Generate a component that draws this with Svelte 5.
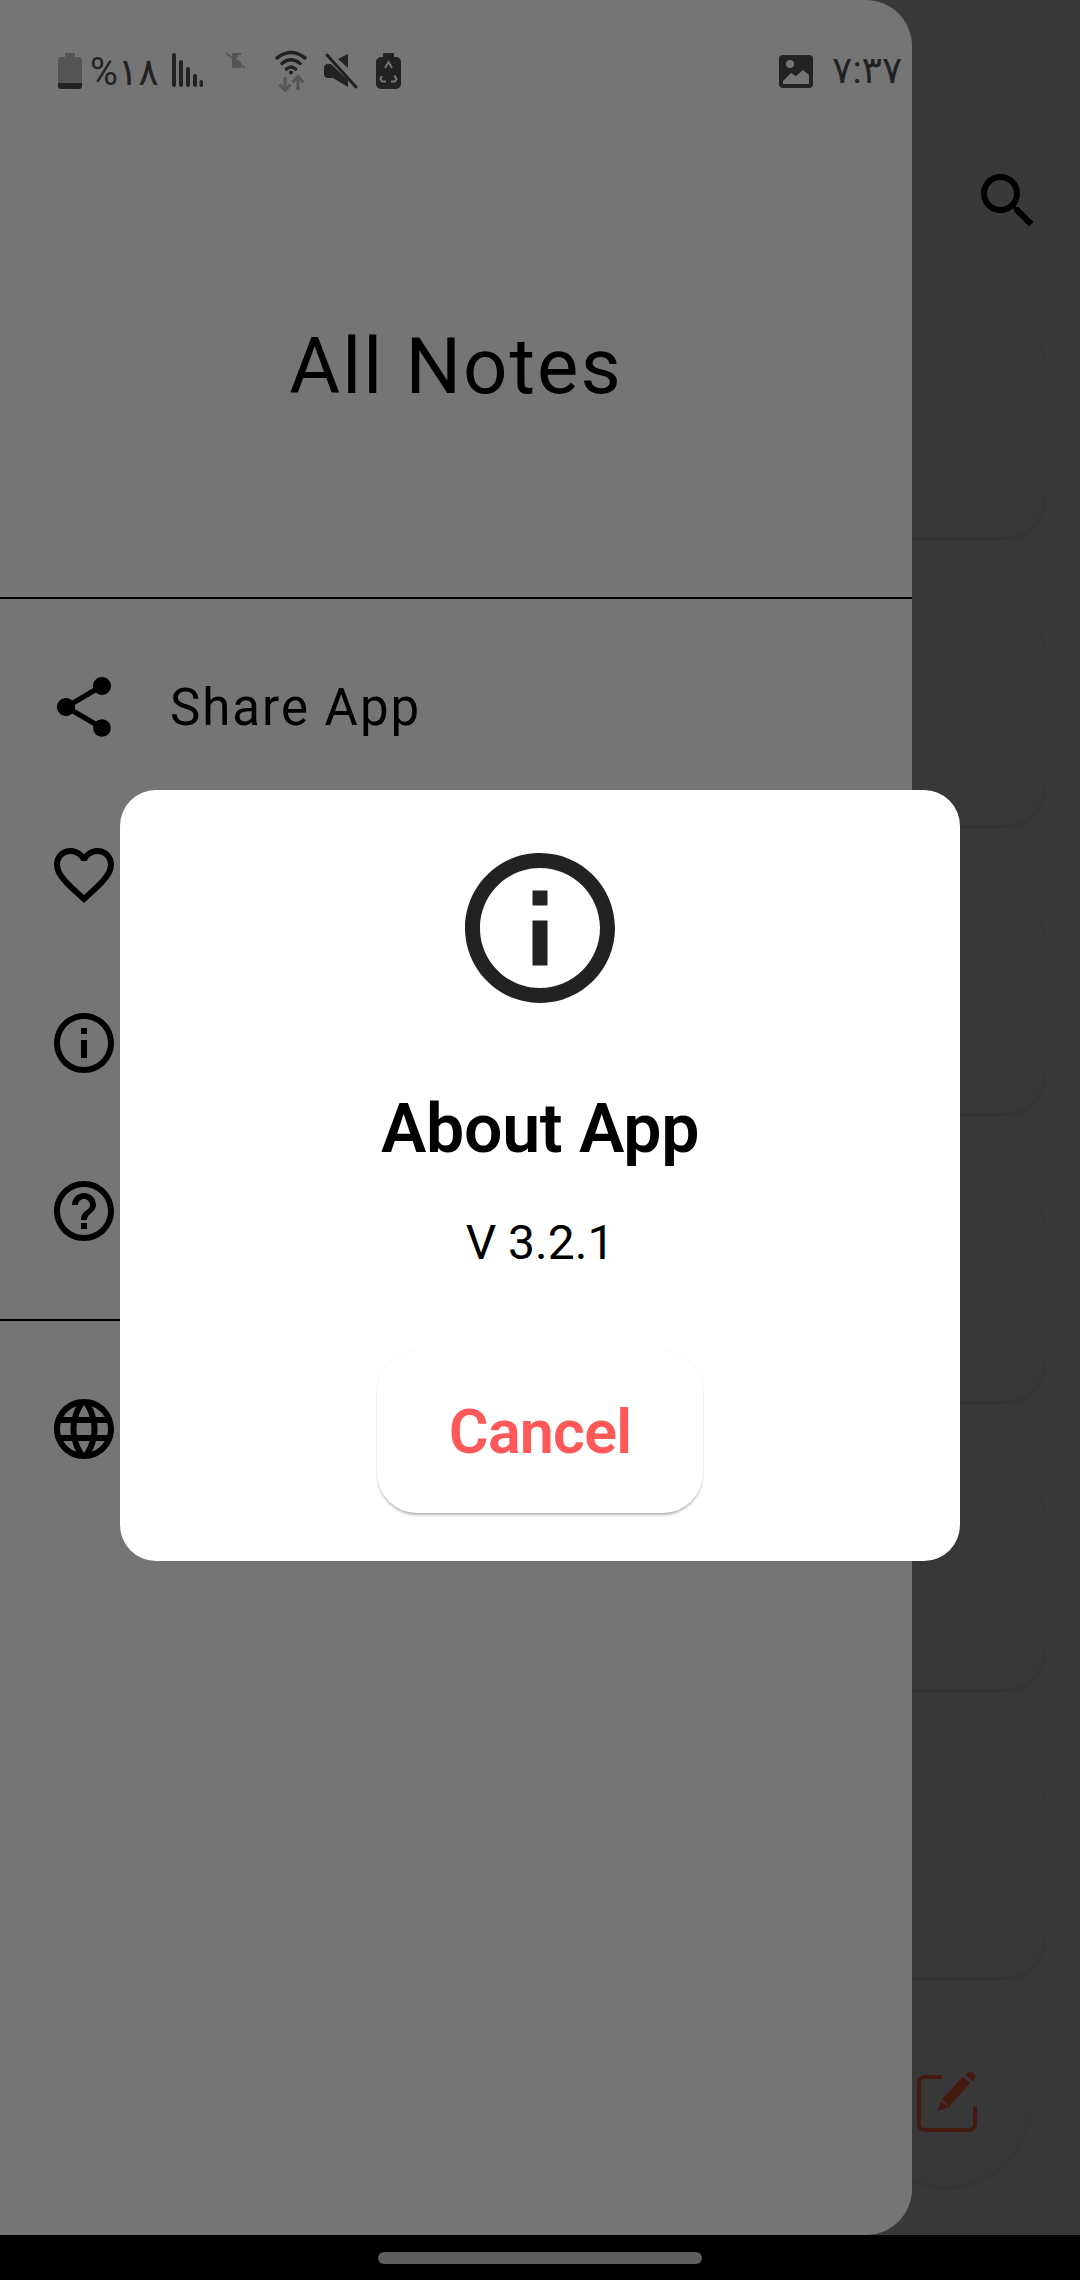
<script lang="ts">
  const cards = [1, 2, 3, 4, 5, 6]
  const info = 'M11 7h2v2h-2zm0 4h2v6h-2zm1-9C6.48 2 2 6.48 2 12s4.48 10 10 10 10-4.48 10-10S17.52 2 12 2zm0 18c-4.41 0-8-3.59-8-8s3.59-8 8-8 8 3.59 8 8-3.59 8-8 8z'
  const menu = [
    { label: 'Share App', icon: 'M18 16.08c-.76 0-1.44.3-1.96.77L8.91 12.7c.05-.23.09-.46.09-.7s-.04-.47-.09-.7l7.05-4.11c.54.5 1.25.81 2.04.81 1.66 0 3-1.34 3-3s-1.34-3-3-3-3 1.34-3 3c0 .24.04.47.09.7L8.04 9.81C7.5 9.31 6.79 9 6 9c-1.66 0-3 1.34-3 3s1.34 3 3 3c.79 0 1.5-.31 2.04-.81l7.12 4.16c-.05.21-.08.43-.08.65 0 1.61 1.31 2.92 2.92 2.92 1.61 0 2.92-1.31 2.92-2.92s-1.31-2.92-2.92-2.92z' },
    { label: '', icon: 'M16.5 3c-1.74 0-3.41.81-4.5 2.09C10.91 3.81 9.24 3 7.5 3 4.42 3 2 5.42 2 8.5c0 3.78 3.4 6.86 8.55 11.54L12 21.35l1.45-1.32C18.6 15.36 22 12.28 22 8.5 22 5.42 19.58 3 16.5 3zm-4.4 15.55l-.1.1-.1-.1C7.14 14.24 4 11.39 4 8.5 4 6.5 5.5 5 7.5 5c1.54 0 3.04.99 3.57 2.36h1.87C13.46 5.99 14.96 5 16.5 5c2 0 3.5 1.5 3.5 3.5 0 2.89-3.14 5.74-7.9 10.05z' },
    { label: '', icon: info },
    { label: '', icon: 'M11 18h2v-2h-2v2zm1-16C6.48 2 2 6.48 2 12s4.48 10 10 10 10-4.48 10-10S17.52 2 12 2zm0 18c-4.41 0-8-3.59-8-8s3.59-8 8-8 8 3.59 8 8-3.59 8-8 8zm0-14c-2.21 0-4 1.79-4 4h2c0-1.1.9-2 2-2s2 .9 2 2c0 2-3 1.75-3 5h2c0-2.25 3-2.5 3-5 0-2.21-1.79-4-4-4z' }
  ]
  const globe = 'M11.99 2C6.47 2 2 6.48 2 12s4.47 10 9.99 10C17.52 22 22 17.52 22 12S17.52 2 11.99 2zm6.93 6h-2.95c-.32-1.25-.78-2.45-1.38-3.56 1.84.63 3.37 1.91 4.33 3.56zM12 4.04c.83 1.2 1.48 2.53 1.91 3.96h-3.82c.43-1.43 1.08-2.76 1.91-3.96zM4.26 14C4.1 13.36 4 12.69 4 12s.1-1.36.26-2h3.38c-.08.66-.14 1.32-.14 2 0 .68.06 1.34.14 2H4.26zm.82 2h2.95c.32 1.25.78 2.45 1.38 3.56-1.84-.63-3.37-1.9-4.33-3.56zm2.95-8H5.08c.96-1.66 2.49-2.93 4.33-3.56C8.81 5.55 8.35 6.75 8.03 8zM12 19.96c-.83-1.2-1.48-2.53-1.91-3.96h3.82c-.43 1.43-1.08 2.76-1.91 3.96zM14.34 14H9.66c-.09-.66-.16-1.32-.16-2 0-.68.07-1.35.16-2h4.68c.09.65.16 1.32.16 2 0 .68-.07 1.34-.16 2zm.25 5.56c.6-1.11 1.06-2.31 1.38-3.56h2.95c-.96 1.65-2.49 2.93-4.33 3.56zM16.36 14c.08-.66.14-1.32.14-2 0-.68-.06-1.34-.14-2h3.38c.16.64.26 1.31.26 2s-.1 1.36-.26 2h-3.38z'
</script>

<div class="screen">
  <main class="notes">
    <header class="appbar">
      <svg class="icon" viewBox="0 0 24 24"><path d="M15.5 14h-.79l-.28-.27C15.41 12.59 16 11.11 16 9.5 16 5.91 13.09 3 9.5 3S3 5.91 3 9.5 5.91 16 9.5 16c1.61 0 3.09-.59 4.23-1.57l.27.28v.79l5 4.99L20.49 19l-4.99-5zm-6 0C7.01 14 5 11.99 5 9.5S7.01 5 9.5 5 14 7.01 14 9.5 11.99 14 9.5 14z" /></svg>
    </header>
    <div class="card-list">
      {#each cards as card (card)}
        <div class="card"></div>
      {/each}
    </div>
    <div class="fab">
      <svg width="60" height="60" viewBox="0 0 60 60">
        <path d="M23 5H8a6 6 0 0 0-6 6v41a6 6 0 0 0 6 6h44a6 6 0 0 0 6-6V36" fill="none" stroke="#441a10" stroke-width="4" stroke-linecap="round" />
        <path d="M21 39l3-10 8 6zM25 27L46 5l7 6-21 24zM48 3l3-2.500c2-1 4-1 5.500.5s2.500 3.500 1.500 5.500L55.500 9z" fill="#441a10" />
      </svg>
    </div>
  </main>

  <nav class="navbar"><span class="pill"></span></nav>

  <aside class="drawer">
    <div class="drawer-head"><h1>All Notes</h1></div>
    <div class="menu">
      {#each menu as item}
        <div class="row">
          <svg class="icon" viewBox="0 0 24 24"><path d={item.icon} /></svg>
          {#if item.label}<span>{item.label}</span>{/if}
        </div>
      {/each}
    </div>
    <div class="menu">
      <div class="row">
        <svg class="icon" viewBox="0 0 24 24"><path d={globe} /></svg>
      </div>
    </div>
  </aside>

  <div class="statusbar">
    <div class="status-left">
      <svg width="24" height="42" viewBox="0 0 24 42">
        <path d="M7 3h10v4h4a3 3 0 0 1 3 3v23H0V10a3 3 0 0 1 3-3h4z" fill="#555" />
        <path d="M0 33h24v3a3 3 0 0 1-3 3H3a3 3 0 0 1-3-3z" fill="#222" />
      </svg>
      <span class="level">%۱۸</span>
      <svg class="gap-signal" width="31" height="42" viewBox="0 0 31 42" fill="#222">
        <rect x="0" y="3" width="4" height="34" rx="2" />
        <rect x="7" y="10" width="4" height="27" rx="2" />
        <rect x="14" y="17" width="4" height="20" rx="2" />
        <rect x="21" y="24" width="4" height="13" rx="2" />
        <rect x="27.500" y="30" width="3.500" height="7" rx="1.700" />
      </svg>
      <svg class="gap-dim" width="19" height="42" viewBox="0 0 19 42">
        <path d="M6 3h9v2h-2l-3 4 5 3v6H6z" fill="#555" />
        <path d="M0 3l19 15" stroke="#555" stroke-width="1.500" />
      </svg>
      <svg class="gap-wifi" width="32" height="42" viewBox="0 0 32 42">
        <path d="M2 8Q16-3 30 8M7 13.500Q16 6 25 13.500M11.500 19Q16 15 20.500 19" fill="none" stroke="#222" stroke-width="3.500" stroke-linecap="round" />
        <circle cx="16" cy="22.500" r="2" fill="#222" />
        <path d="M10 27v13M4.500 34.500l5.500 6 5.500-6M23 40V27M17.500 32.500l5.500-6 5.500 6" fill="none" stroke="#555" stroke-width="3" />
      </svg>
      <svg class="gap-mute" width="34" height="42" viewBox="0 0 34 42">
        <path d="M24 4v14L14 9zM0 18a4 4 0 0 1 4-4h3l17 16v7L9 28H4a4 4 0 0 1-4-4z" fill="#222" />
        <path d="M3 5l29 32" stroke="#222" stroke-width="3" stroke-linecap="round" />
      </svg>
      <svg class="gap-recycle" width="25" height="42" viewBox="0 0 25 42">
        <path d="M7 3h11v4h2a5 5 0 0 1 5 5v22a5 5 0 0 1-5 5H5a5 5 0 0 1-5-5V12a5 5 0 0 1 5-5h2z" fill="#222" />
        <path d="M9 18l3.500-6 3.500 6M6 26l-1.500 3 1.500 2.500h4M15 31.500h4l1.500-2.500-2-3.500" fill="none" stroke="#757575" stroke-width="2" />
      </svg>
    </div>
    <div class="status-right">
      <svg width="34" height="42" viewBox="0 0 34 42">
        <rect y="5" width="34" height="33" rx="4" fill="#222" />
        <circle cx="11" cy="14" r="4" fill="#757575" />
        <path d="M4 31v3h26v-9l-6-5-7 6-5-3z" fill="#757575" />
      </svg>
      <span class="time">۷:۳۷</span>
    </div>
  </div>

  <div class="scrim">
    <section class="dialog">
      <svg class="dialog-icon" viewBox="0 0 24 24"><path d={info} /></svg>
      <h2>About App</h2>
      <p>V 3.2.1</p>
      <button type="button">Cancel</button>
    </section>
  </div>
</div>

<style>
  :global(body) {
    margin: 0;
    background: #000;
  }

  .screen {
    position: relative;
    width: 1080px;
    height: 2280px;
    display: flex;
    flex-direction: column;
    overflow: hidden;
    background: #393939;
    font-family: Roboto, "DejaVu Sans", sans-serif;
    color: #000;
  }

  .notes {
    position: relative;
    flex: 1;
    padding: 165px 36px 0;
  }

  .appbar {
    display: flex;
    justify-content: flex-end;
    height: 156px;
  }

  .icon {
    width: 72px;
    height: 72px;
    flex: none;
  }

  .card-list {
    display: flex;
    flex-direction: column;
    gap: 72px;
  }

  .card {
    height: 216px;
    border-radius: 38px;
    background: #383838;
    box-shadow: 0 3px 4px -1px rgba(0, 0, 0, 0.14);
  }

  .fab {
    position: absolute;
    left: 862px;
    top: 2017px;
    width: 170px;
    height: 170px;
    border-radius: 50%;
    display: flex;
    align-items: center;
    justify-content: center;
    background: #383838;
    box-shadow: 0 2px 3px -1px rgba(0, 0, 0, 0.14);
  }

  .navbar {
    height: 45px;
    display: flex;
    justify-content: center;
    align-items: flex-start;
    background: #000;
  }

  .pill {
    width: 324px;
    height: 12px;
    margin-top: 17px;
    border-radius: 6px;
    background: #5f5f5f;
  }

  .drawer {
    position: absolute;
    left: 0;
    top: 0;
    width: 912px;
    height: 2235px;
    border-radius: 0 46px 46px 0;
    background: #757575;
  }

  .drawer-head {
    height: 599px;
    box-sizing: border-box;
    padding-top: 322px;
    text-align: center;
    border-bottom: 2px solid #000;
  }

  h1 {
    margin: 0;
    font-size: 78px;
    line-height: 90px;
    font-weight: 400;
    letter-spacing: 2px;
  }

  .menu {
    padding: 24px 0;
    border-bottom: 2px solid #000;
  }

  .menu:last-child {
    border-bottom: 0;
  }

  .row {
    height: 168px;
    display: flex;
    align-items: center;
    gap: 50px;
    padding-left: 48px;
    font-size: 51px;
    letter-spacing: 2px;
  }

  .statusbar {
    position: absolute;
    left: 58px;
    top: 50px;
    width: 842px;
    height: 42px;
    display: flex;
    justify-content: space-between;
    color: #222;
  }

  .status-left,
  .status-right {
    display: flex;
    align-items: flex-start;
  }

  .level {
    width: 64px;
    margin-left: 8px;
    font-size: 38px;
    line-height: 44px;
    letter-spacing: -3px;
    white-space: nowrap;
  }

  .gap-signal {
    margin-left: 18px;
  }

  .gap-dim {
    margin-left: 23px;
  }

  .gap-wifi {
    margin-left: 30px;
  }

  .gap-mute {
    margin-left: 17px;
  }

  .gap-recycle {
    margin-left: 18px;
  }

  .time {
    width: 68px;
    margin-left: 19px;
    font-size: 38px;
    line-height: 40px;
    letter-spacing: -1.5px;
    white-space: nowrap;
  }

  .scrim {
    position: absolute;
    inset: 0;
    display: flex;
    justify-content: center;
    align-items: flex-start;
    padding-top: 790px;
    box-sizing: border-box;
  }

  .dialog {
    width: 840px;
    height: 771px;
    box-sizing: border-box;
    padding-top: 48px;
    display: flex;
    flex-direction: column;
    align-items: center;
    border-radius: 36px;
    background: #fff;
  }

  .dialog-icon {
    width: 180px;
    height: 180px;
    fill: #222;
  }

  h2 {
    margin: 71px 0 0;
    font-size: 68px;
    line-height: 80px;
    font-weight: 600;
    letter-spacing: -0.3px;
  }

  p {
    margin: 46px 0 0;
    font-size: 48px;
    line-height: 56px;
  }

  button {
    width: 326px;
    height: 162px;
    margin-top: 80px;
    border: 0;
    border-radius: 40px;
    background: #fff;
    color: #ff5858;
    font-family: inherit;
    font-size: 61px;
    font-weight: 600;
    letter-spacing: -0.8px;
    box-shadow: 0 3px 3px -1px rgba(0, 0, 0, 0.3), 0 0 2px rgba(0, 0, 0, 0.06);
  }
</style>
